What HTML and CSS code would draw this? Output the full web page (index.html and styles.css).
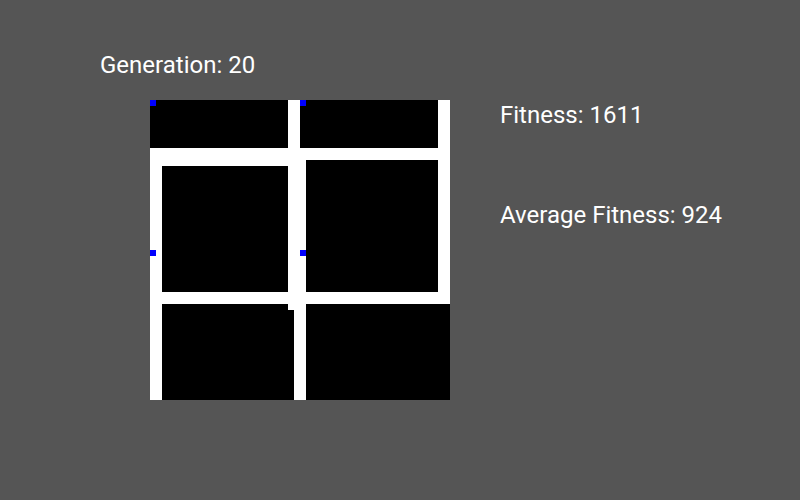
FILE: index.html
```html
<!DOCTYPE html>
<html lang="en">
<head>
    <meta charset="UTF-8">
    <title>Generation viewer</title>
    <link rel="stylesheet" href="styles.css">
</head>
<body>

<div class="scene">
    <div class="left">
        <div class="label">Generation: 20</div>
        <div class="board">
            <div class="wall" style="grid-column: 1 / 24; grid-row: 1 / 9;"></div>
            <div class="wall" style="grid-column: 26 / 49; grid-row: 1 / 9;"></div>
            <div class="wall" style="grid-column: 3 / 24; grid-row: 12 / 33;"></div>
            <div class="wall" style="grid-column: 27 / 49; grid-row: 11 / 33;"></div>
            <div class="wall" style="grid-column: 3 / 24; grid-row: 35 / 51;"></div>
            <div class="wall" style="grid-column: 24 / 25; grid-row: 36 / 51;"></div>
            <div class="wall" style="grid-column: 27 / 51; grid-row: 35 / 51;"></div>

            <div class="dot" style="grid-column: 1; grid-row: 1;"></div>
            <div class="dot" style="grid-column: 26; grid-row: 1;"></div>
            <div class="dot" style="grid-column: 1; grid-row: 26;"></div>
            <div class="dot" style="grid-column: 26; grid-row: 26;"></div>
        </div>
    </div>
    <div class="right">
        <div class="label">Fitness: 1611</div>
        <div class="label avg">Average Fitness: 924</div>
    </div>
</div>

</body>
</html>
```

FILE: styles.css
```css
body {
    margin: 0;
    background-color: #555555;
    font-family: Roboto, "Liberation Sans", sans-serif;
    color: white;
}
.scene {
    display: flex;
    gap: 50px;
    padding: 51px 0 0 100px;
}
.label {
    font-size: 24px;
    line-height: 28px;
    white-space: nowrap;
}
.board {
    display: grid;
    grid-template-columns: repeat(50, 6px);
    grid-template-rows: repeat(50, 6px);
    width: 300px;
    height: 300px;
    margin: 21px 0 0 50px;
    background-color: white;
}
.wall {
    background-color: black;
}
.dot {
    background-color: #0000ff;
}
.right {
    margin-top: 50px;
}
.avg {
    margin-top: 72px;
}
```
